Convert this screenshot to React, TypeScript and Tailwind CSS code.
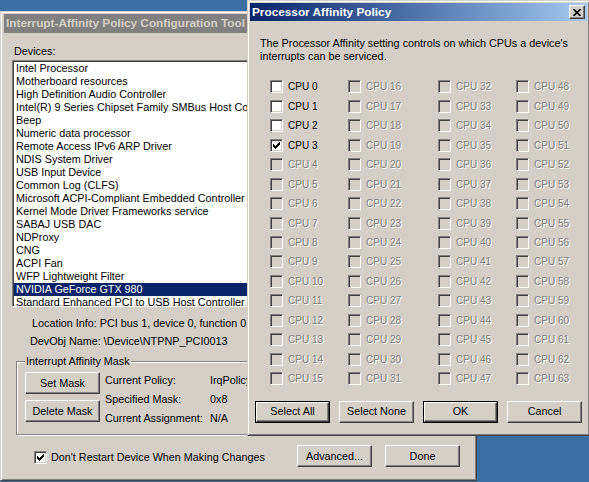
import React from "react";

const raised =
  "border border-t-white border-l-white border-r-[#404040] border-b-[#404040] shadow-[inset_-1px_-1px_0_#808080,inset_1px_1px_0_#d4d0c8]";
const sunken =
  "border border-t-[#808080] border-l-[#808080] border-r-white border-b-white shadow-[inset_1px_1px_0_#404040,inset_-1px_-1px_0_#d4d0c8]";
const frame =
  "border border-t-[#d4d0c8] border-l-[#d4d0c8] border-r-[#404040] border-b-[#404040] shadow-[inset_1px_1px_0_#ffffff,inset_-1px_-1px_0_#808080]";
const disabledText = "text-[#808080] [text-shadow:1px_1px_0_#ffffff]";

function Tick() {
  const cols: [number, number][] = [
    [2, 4],
    [3, 5],
    [4, 6],
    [5, 5],
    [6, 4],
    [7, 3],
    [8, 2],
  ];
  return (
    <svg width="11" height="11" viewBox="0 0 11 11" shapeRendering="crispEdges" className="block">
      {cols.map(([x, y]) => (
        <rect key={x} x={x} y={y} width="1" height="3" fill="#000" />
      ))}
    </svg>
  );
}

function Box({ checked, disabled }: { checked?: boolean; disabled?: boolean }) {
  return (
    <div className={`h-[13px] w-[13px] shrink-0 ${sunken} ${disabled ? "bg-[#d4d0c8]" : "bg-white"}`}>
      {checked && <Tick />}
    </div>
  );
}

function Btn({ children, def, w = "w-[75px]" }: { children: React.ReactNode; def?: boolean; w?: string }) {
  const inner = (
    <div className={`flex h-full w-full items-center justify-center bg-[#d4d0c8] ${raised}`}>{children}</div>
  );
  return <div className={`h-[22px] shrink-0 ${w} ${def ? "border border-black" : ""}`}>{inner}</div>;
}

const devices = [
  "Intel Processor",
  "Motherboard resources",
  "High Definition Audio Controller",
  "Intel(R) 9 Series Chipset Family SMBus Host Controller - 8CA2",
  "Beep",
  "Numeric data processor",
  "Remote Access IPv6 ARP Driver",
  "NDIS System Driver",
  "USB Input Device",
  "Common Log (CLFS)",
  "Microsoft ACPI-Compliant Embedded Controller",
  "Kernel Mode Driver Frameworks service",
  "SABAJ USB DAC",
  "NDProxy",
  "CNG",
  "ACPI Fan",
  "WFP Lightweight Filter",
  "NVIDIA GeForce GTX 980",
  "Standard Enhanced PCI to USB Host Controller",
];

function MainWindow() {
  return (
    <div className={`absolute left-0 top-[11px] h-[470px] w-[477px] bg-[#d4d0c8] px-[3px] pt-[2px] ${frame}`}>
      <div className="flex h-[19px] items-center bg-[#808080] pl-[2px] text-[11.8px] font-bold text-[#d4d0c8] whitespace-nowrap overflow-hidden">
        Interrupt-Affinity Policy Configuration Tool
      </div>
      <div className="mt-[12px] pl-[10px]">Devices:</div>
      <div className={`ml-[8px] mt-[2px] h-[247px] w-[455px] overflow-hidden bg-white ${sunken} px-[1px] pt-[1px]`}>
        {devices.map((d) => (
          <div
            key={d}
            className={`h-[13px] whitespace-nowrap pl-[2px] ${
              d === "NVIDIA GeForce GTX 980" ? "bg-[#0a246a] text-white" : ""
            }`}
          >
            {d}
          </div>
        ))}
      </div>
      <div className="mt-[10px] whitespace-nowrap pl-[28px]">Location Info: PCI bus 1, device 0, function 0</div>
      <div className="mt-[5px] whitespace-nowrap pl-[26px]">DevObj Name: \Device\NTPNP_PCI0013</div>
      <fieldset
        className={`ml-[12px] mt-[7px] w-[380px] border border-[#808080] pb-[6px] pl-[8px] pt-[3px] shadow-[1px_1px_0_#ffffff,inset_1px_1px_0_#ffffff]`}
      >
        <legend className="bg-[#d4d0c8] px-[1px]">Interrupt Affinity Mask</legend>
        <div className="flex">
          <div className="flex flex-col gap-[6px] pt-[1px]">
            <Btn>Set Mask</Btn>
            <Btn>Delete Mask</Btn>
          </div>
          <div className="ml-[5px] flex flex-col">
            {[
              ["Current Policy:", "IrqPolicySpecifiedProcessors"],
              ["Specified Mask:", "0x8"],
              ["Current Assignment:", "N/A"],
            ].map(([k, v]) => (
              <div key={k} className="flex h-[19px] items-center whitespace-nowrap">
                <span className="w-[105px]">{k}</span>
                <span>{v}</span>
              </div>
            ))}
          </div>
        </div>
      </fieldset>
      <div className="mt-[10px] flex items-start pr-[13px]">
        <div className="ml-[30px] mt-[6px] flex items-center gap-[4px] whitespace-nowrap">
          <Box checked />
          <span>Don't Restart Device When Making Changes</span>
        </div>
        <div className="ml-auto flex gap-[13px]">
          <Btn>Advanced...</Btn>
          <Btn>Done</Btn>
        </div>
      </div>
    </div>
  );
}

function Dialog() {
  const rows = Array.from({ length: 16 }, (_, r) => r);
  const cols = [0, 1, 2, 3];
  return (
    <div className={`absolute left-[247px] top-0 h-[436px] w-[343px] bg-[#d4d0c8] p-[2px] ${frame}`}>
      <div className="flex h-[18px] items-center justify-between bg-gradient-to-r from-[#0a246a] to-[#a6caf0] pl-[2px] pr-[2px]">
        <span className="text-[11.8px] font-bold text-white whitespace-nowrap">Processor Affinity Policy</span>
        <div className={`flex h-[14px] w-[16px] items-center justify-center bg-[#d4d0c8] ${raised}`}>
          <svg width="8" height="7" viewBox="0 0 8 7" className="block">
            <path d="M0.5 0 L7.5 7 M7.5 0 L0.5 7" stroke="#000" strokeWidth="1.6" fill="none" />
          </svg>
        </div>
      </div>
      <div className="mt-[16px] pl-[10px] pr-[4px]">
        The Processor Affinity setting controls on which CPUs a device's
        <br />
        interrupts can be serviced.
      </div>
      <div className="mt-[14px] grid grid-cols-[78px_90px_78px_1fr] pl-[20px]">
        {rows.map((r) =>
          cols.map((c) => {
            const n = c * 16 + r;
            const enabled = n < 4;
            const label = `CPU ${n}`;
            return (
              <div key={n} className="flex h-[19.47px] items-center gap-[5px] whitespace-nowrap">
                <Box disabled={!enabled} checked={n === 3} />
                <span className={`text-[10px] ${enabled ? "text-black" : disabledText}`}>{label}</span>
              </div>
            );
          })
        )}
      </div>
      <div className="mt-[12px] flex gap-[9px] pl-[5px]">
        <Btn def>Select All</Btn>
        <Btn>Select None</Btn>
        <Btn def>OK</Btn>
        <Btn>Cancel</Btn>
      </div>
    </div>
  );
}

export default function App() {
  return (
    <div className="relative h-[482px] w-[589px] overflow-hidden bg-[#3a6ea5] font-['Liberation_Sans',Arial,sans-serif] text-[10.8px] leading-[13px] text-black">
      <MainWindow />
      <Dialog />
    </div>
  );
}
